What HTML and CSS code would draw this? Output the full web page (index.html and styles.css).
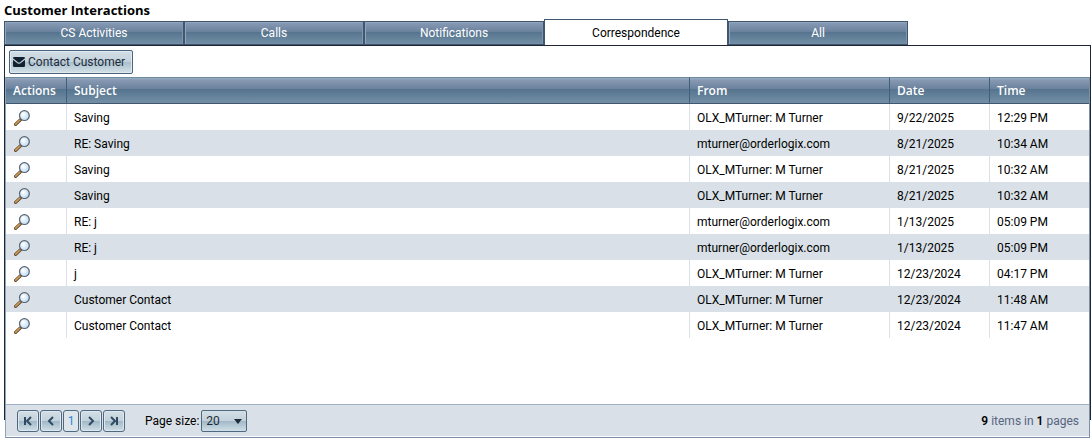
FILE: index.html
```html
<!DOCTYPE html>
<html lang="en">
<head>
    <meta charset="UTF-8">
    <meta name="viewport" content="width=device-width, initial-scale=1.0">
    <title>Customer Interactions</title>
    <link rel="stylesheet" href="styles.css">
</head>
<body>
    <!-- Shared icons -->
    <svg class="sprite" aria-hidden="true">
        <defs>
            <radialGradient id="lens" cx="0.4" cy="0.4" r="0.7">
                <stop offset="0" stop-color="#ffffff"/>
                <stop offset="1" stop-color="#b4d6f2"/>
            </radialGradient>
        </defs>
        <symbol id="magnifier" viewBox="0 0 16 16">
            <path d="M1.6 14.4 6.6 9.6" stroke="#5c4023" stroke-width="3.2" stroke-linecap="round"/>
            <path d="M1.7 14.2 5.8 10.2" stroke="#c99a5b" stroke-width="1.8" stroke-linecap="round"/>
            <circle cx="10.4" cy="5.6" r="4.9" fill="url(#lens)" stroke="#5a6470" stroke-width="1.2"/>
            <path d="M7.7 5.4a2.8 2.8 0 0 1 2.4-2.5" fill="none" stroke="#ffffff" stroke-width="1"/>
        </symbol>
    </svg>

    <h1>Customer Interactions</h1>
    <nav class="tabs">
        <a href="#activities">CS Activities</a>
        <a href="#calls">Calls</a>
        <a href="#notifications">Notifications</a>
        <a href="#correspondence" class="active">Correspondence</a>
        <a href="#all">All</a>
    </nav>

    <section class="panel">
        <div class="toolbar">
            <button class="contact" type="button">
                <svg width="12" height="10" viewBox="0 0 12 10" aria-hidden="true">
                    <path d="M0 1.2Q0 0 1.2 0H10.8Q12 0 12 1.2L7 5.2Q6 6 5 5.2ZM0 2.8 4.3 6.2Q6 7.4 7.7 6.2L12 2.8V8.8Q12 10 10.8 10H1.2Q0 10 0 8.8Z" fill="#13202e"/>
                </svg>
                <span>Contact Customer</span>
            </button>
        </div>

        <div class="grid">
            <div class="grid-body">
                <table>
                    <thead>
                        <tr>
                            <th class="col-actions">Actions</th>
                            <th>Subject</th>
                            <th class="col-from">From</th>
                            <th class="col-date">Date</th>
                            <th class="col-time">Time</th>
                        </tr>
                    </thead>
                    <tbody>
                        <tr>
                            <td><button class="view" type="button" aria-label="View"><svg><use href="#magnifier"/></svg></button></td>
                            <td>Saving</td>
                            <td>OLX_MTurner: M Turner</td>
                            <td>9/22/2025</td>
                            <td>12:29 PM</td>
                        </tr>
                        <tr>
                            <td><button class="view" type="button" aria-label="View"><svg><use href="#magnifier"/></svg></button></td>
                            <td>RE: Saving</td>
                            <td>mturner@orderlogix.com</td>
                            <td>8/21/2025</td>
                            <td>10:34 AM</td>
                        </tr>
                        <tr>
                            <td><button class="view" type="button" aria-label="View"><svg><use href="#magnifier"/></svg></button></td>
                            <td>Saving</td>
                            <td>OLX_MTurner: M Turner</td>
                            <td>8/21/2025</td>
                            <td>10:32 AM</td>
                        </tr>
                        <tr>
                            <td><button class="view" type="button" aria-label="View"><svg><use href="#magnifier"/></svg></button></td>
                            <td>Saving</td>
                            <td>OLX_MTurner: M Turner</td>
                            <td>8/21/2025</td>
                            <td>10:32 AM</td>
                        </tr>
                        <tr>
                            <td><button class="view" type="button" aria-label="View"><svg><use href="#magnifier"/></svg></button></td>
                            <td>RE: j</td>
                            <td>mturner@orderlogix.com</td>
                            <td>1/13/2025</td>
                            <td>05:09 PM</td>
                        </tr>
                        <tr>
                            <td><button class="view" type="button" aria-label="View"><svg><use href="#magnifier"/></svg></button></td>
                            <td>RE: j</td>
                            <td>mturner@orderlogix.com</td>
                            <td>1/13/2025</td>
                            <td>05:09 PM</td>
                        </tr>
                        <tr>
                            <td><button class="view" type="button" aria-label="View"><svg><use href="#magnifier"/></svg></button></td>
                            <td>j</td>
                            <td>OLX_MTurner: M Turner</td>
                            <td>12/23/2024</td>
                            <td>04:17 PM</td>
                        </tr>
                        <tr>
                            <td><button class="view" type="button" aria-label="View"><svg><use href="#magnifier"/></svg></button></td>
                            <td>Customer Contact</td>
                            <td>OLX_MTurner: M Turner</td>
                            <td>12/23/2024</td>
                            <td>11:48 AM</td>
                        </tr>
                        <tr>
                            <td><button class="view" type="button" aria-label="View"><svg><use href="#magnifier"/></svg></button></td>
                            <td>Customer Contact</td>
                            <td>OLX_MTurner: M Turner</td>
                            <td>12/23/2024</td>
                            <td>11:47 AM</td>
                        </tr>
                    </tbody>
                </table>
            </div>

            <div class="pager">
                <div class="pages">
                    <button type="button" aria-label="First page"><svg viewBox="0 0 10 10"><path d="M2 1V9M8 1 4 5 8 9"/></svg></button>
                    <button type="button" aria-label="Previous page"><svg viewBox="0 0 10 10"><path d="M7 1 3 5 7 9"/></svg></button>
                    <button type="button" class="current">1</button>
                    <button type="button" aria-label="Next page"><svg viewBox="0 0 10 10"><path d="M3 1 7 5 3 9"/></svg></button>
                    <button type="button" aria-label="Last page"><svg viewBox="0 0 10 10"><path d="M2 1 6 5 2 9M8 1V9"/></svg></button>
                </div>
                <label for="page-size">Page size:</label>
                <div class="select">
                    <select id="page-size">
                        <option>10</option>
                        <option selected>20</option>
                        <option>50</option>
                    </select>
                </div>
                <p class="summary"><strong>9</strong> items in <strong>1</strong> pages</p>
            </div>
        </div>
    </section>
</body>
</html>
```
FILE: styles.css
```css
* {
    box-sizing: border-box;
}
body {
    margin: 0;
    padding: 0 1px 20px 4px;
    background-color: white;
    color: black;
    font-family: Roboto, "Noto Sans", sans-serif;
    font-size: 12px;
    line-height: 16px;
}
button, select {
    font: inherit;
    cursor: pointer;
}
.sprite {
    position: absolute;
    width: 0;
    height: 0;
}
h1 {
    margin: 0;
    padding-top: 1px;
    font-family: "Open Sans", "Noto Sans", sans-serif;
    font-size: 13px;
    line-height: 18px;
    font-weight: 700;
}

/* Tabs */
.tabs {
    display: flex;
    align-items: flex-end;
}
.tabs a {
    width: 180px;
    height: 24px;
    border: 1px solid #40566e;
    box-shadow: inset 1px 1px #8fa6bc, inset -1px 0 #8096ac;
    background: linear-gradient(#8a9cb6, #6a819c 45%, #56748e 46%, #728fa6);
    color: white;
    line-height: 22px;
    text-align: center;
    text-decoration: none;
}
.tabs a.active {
    width: 184px;
    height: 26px;
    border-bottom: none;
    box-shadow: none;
    background: white;
    color: black;
    line-height: 26px;
}

/* Panel */
.panel {
    display: flow-root;
    border: 1px solid #1d2632;
    border-bottom: none;
}
.toolbar {
    padding: 4px 4px 3px;
}
.contact {
    display: flex;
    align-items: center;
    gap: 3px;
    height: 24px;
    padding: 0 7px 0 3px;
    border: 1px solid #4b6580;
    border-radius: 2px;
    background: linear-gradient(#d3dee5, #c3d2dc 48%, #a9bfcc 50%, #d3e1e8);
    box-shadow: inset 0 0 0 1px #dfe9ee;
    color: #1d2b3a;
}

/* The grid hangs below the end of the panel frame */
.grid {
    margin-bottom: -18px;
    border: 1px solid #7b8fa8;
    border-left-color: #8fa3ba;
    border-top: none;
}
.grid-body {
    min-height: 327px;
}
table {
    width: 100%;
    border-collapse: separate;
    border-spacing: 0;
    table-layout: fixed;
}
th, td {
    padding: 0 7px;
    text-align: left;
    white-space: nowrap;
}
th {
    height: 27px;
    border-top: 1px solid #6d8aa0;
    border-bottom: 1px solid #40566e;
    border-left: 1px solid #40607a;
    background: linear-gradient(#9aafc2, #8799b3 2px, #6a819c 44%, #56748e 45%, #728fa6);
    color: white;
    font-family: "Open Sans", "Noto Sans", sans-serif;
    font-size: 12px;
    font-weight: 600;
}
td {
    height: 26px;
    padding-top: 1px;
    border-left: 1px solid #d9e0e7;
}
th:first-child, td:first-child {
    border-left: none;
}
tbody tr:nth-child(even) {
    background-color: #d9e0e7;
}
.col-actions {
    width: 60px;
}
.col-from {
    width: 200px;
}
.col-date, .col-time {
    width: 100px;
}
.view {
    display: block;
    width: 18px;
    height: 18px;
    padding: 1px;
    border: none;
    background: none;
}
.view svg {
    display: block;
    width: 16px;
    height: 16px;
}

/* Pager */
.pager {
    display: flex;
    align-items: center;
    height: 33px;
    padding: 0 10px 0 11px;
    border-top: 1px solid #9fb1c6;
    box-shadow: inset 0 -1px white;
    background-color: #d9e0e7;
}
.pages {
    display: flex;
    gap: 1px;
}
.pages button {
    display: flex;
    align-items: center;
    justify-content: center;
    width: 22px;
    height: 22px;
    padding: 0;
    border: 1px solid #4f6980;
    border-radius: 3px;
    background: linear-gradient(#d3dfe6, #c2d1db 48%, #a0b8c7 50%, #d0dee6);
    box-shadow: inset 0 0 0 1px #dde7ed;
}
.pages .current {
    width: 16px;
    background: #dde5eb;
    color: #2b87d8;
}
.pages svg {
    width: 10px;
    height: 10px;
    fill: none;
    stroke: #2f4a63;
    stroke-width: 2;
}
.pager label {
    margin: 0 2px 0 20px;
}
.select {
    position: relative;
}
.select::after {
    content: "";
    position: absolute;
    top: 9px;
    right: 5px;
    border: 4px solid transparent;
    border-top: 5px solid #1d2b3a;
    border-bottom: none;
    pointer-events: none;
}
.select select {
    display: block;
    width: 46px;
    height: 22px;
    padding: 0 4px;
    appearance: none;
    border: 1px solid #4f6980;
    border-radius: 2px;
    background: linear-gradient(#d3dfe6, #c2d1db 48%, #a0b8c7 50%, #d0dee6);
    color: #1d2b3a;
}
.summary {
    margin: 0 0 0 auto;
    color: #566581;
}
.summary strong {
    color: black;
    font-weight: 600;
}
```
